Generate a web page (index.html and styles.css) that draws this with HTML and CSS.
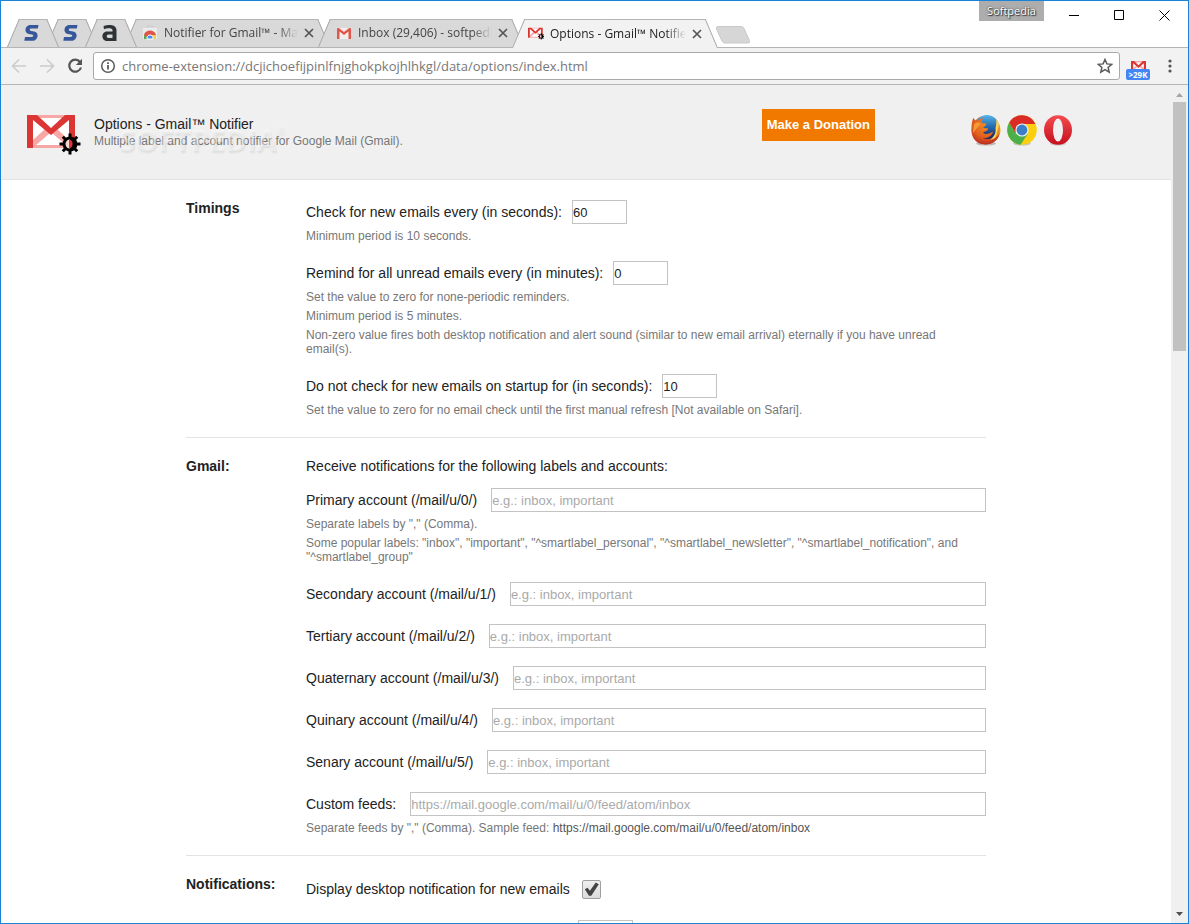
FILE: index.html
```html
<!DOCTYPE html>
<html lang="en">
<head>
    <meta charset="UTF-8">
    <meta name="viewport" content="width=device-width, initial-scale=1.0">
    <title>Options - Gmail™ Notifier</title>
    <link rel="stylesheet" href="styles.css">
</head>
<body>

<svg class="sprite" aria-hidden="true">
    <symbol id="cross" viewBox="0 0 10 10"><path d="M1 1l8 8M9 1l-8 8" fill="none" stroke="currentColor" stroke-width="1.7"/></symbol>
    <symbol id="gear" viewBox="-11 -11 22 22">
        <path d="M0-10.500V10.500M-10.500 0H10.500M-7.200-7.200l14.400 14.400M-7.200 7.200l14.400-14.400" stroke="#000" stroke-width="3"/>
        <circle r="7.500" fill="#000"/>
        <path d="M0-4.500a4.500 4.500 0 0 0 0 9z" fill="#f3d5d5"/>
        <path d="M-1-4.400a4.500 4.500 0 0 1 0 8.800z" fill="#db3634"/>
    </symbol>
    <symbol id="notifier" viewBox="0 0 54 41">
        <path d="M0 0h48v33H0z" fill="#fff"/>
        <path d="M6 0h36v3H6zM6 30h36v3H6z" fill="#f7a8a6"/>
        <path d="M6 31v-6l12-11 5 4L8 31zM42 31v-6L30 14l-5 4 15 13z" fill="#f7a8a6"/>
        <path d="M0 0h10l14 13L38 0h10v33h-6V5L24 20 6 5v28H0z" fill="#db3634"/>
        <use href="#gear" x="32" y="18" width="22" height="22"/>
    </symbol>
    <symbol id="softpedia" viewBox="0 0 15 16"><path d="M14.500 0L13.800 3.600H7.400c-2 0-2.200 2-.2 2.300l3 .5c5.500.9 4 9.400-2 9.400H.3L1 12h6.500c2.200 0 2.400-2 .3-2.400L4.900 9.100C-.4 8.200.7 0 6.500 0z" fill="#36589b"/></symbol>
</svg>

<div class="window">
    <div class="titlebar">
        <div class="tabs">
            <div class="tab pinned">
                <button class="tab-title" aria-label="Softpedia"><svg width="15" height="16"><use href="#softpedia"/></svg></button>
            </div>
            <div class="tab pinned">
                <button class="tab-title" aria-label="Softpedia"><svg width="15" height="16"><use href="#softpedia"/></svg></button>
            </div>
            <div class="tab pinned">
                <button class="tab-title" aria-label="Autoevolution"><svg width="15" height="16" viewBox="0 0 15 16"><path d="M1.500 1.200C5-.6 14.500-1.400 14.500 5.300V16H5C-1.100 16-1.100 6.500 5 6.500h5.500V5.300C10.500 2.700 5 2.900 2 4.200zM10.500 9.500H6.500c-2.400 0-2.400 3.400 0 3.400h4z" fill="#2f3237" fill-rule="evenodd"/></svg></button>
            </div>
            <div class="tab">
                <button class="tab-title">
                    <svg width="16" height="16" viewBox="0 0 16 16">
                        <path d="M5 3V1h6v2" fill="none" stroke="#ccc" stroke-width="1"/>
                        <path d="M1 3h14v11H1z" fill="#ececec"/>
                        <path d="M2 14V10c1-6 11-6 12 0v1H8z" fill="#e0544b"/>
                        <path d="M2 10l5 4H2z" fill="#4caf50"/>
                        <path d="M9 10h5v4H8z" fill="#fbcb43"/>
                        <path d="M5 14v-1c0-4 6-4 6 0v1z" fill="#4a8df0" stroke="#fff"/>
                    </svg>
                    <span>Notifier for Gmail™ - Manager</span>
                </button>
                <button class="tab-close" aria-label="Close tab"><svg width="10" height="10"><use href="#cross"/></svg></button>
            </div>
            <div class="tab">
                <button class="tab-title">
                    <svg width="16" height="16" viewBox="0 0 16 16">
                        <path d="M2 3h12v11H2z" fill="#f3eeee"/>
                        <path d="M1 14V4.200C1 3 2.500 2.600 3.500 3.500L8 7l4.500-3.500C13.500 2.600 15 3 15 4.200V14h-2.500V6.500L8 10 3.500 6.500V14z" fill="#e2574c"/>
                    </svg>
                    <span>Inbox (29,406) - softpedia.com</span>
                </button>
                <button class="tab-close" aria-label="Close tab"><svg width="10" height="10"><use href="#cross"/></svg></button>
            </div>
            <div class="tab active">
                <button class="tab-title">
                    <svg width="16" height="14" viewBox="0 0 52 42"><use href="#notifier" width="54" height="41"/></svg>
                    <span>Options - Gmail™ Notifier</span>
                </button>
                <button class="tab-close" aria-label="Close tab"><svg width="10" height="10"><use href="#cross"/></svg></button>
            </div>
            <button class="new-tab" aria-label="New tab">
                <svg width="36" height="18" viewBox="0 0 36 18"><path d="M3 .5h23q2 0 3 2l5.500 12q1 2.500-1.500 2.500H10q-2 0-3-2L1.500 3Q.6.5 3 .5z" fill="#d6d6d6" stroke="#c9c9c9"/></svg>
            </button>
        </div>
        <span class="brand">Softpedia</span>
        <div class="window-buttons">
            <button aria-label="Minimize"><svg width="11" height="11" viewBox="0 0 11 11"><path d="M0 5.500h10" stroke="#000"/></svg></button>
            <button aria-label="Maximize"><svg width="11" height="11" viewBox="0 0 11 11"><path d="M.5.5h9v9h-9z" fill="none" stroke="#000"/></svg></button>
            <button aria-label="Close"><svg width="11" height="11" viewBox="0 0 11 11"><path d="M.5.5l10 10M10.500.5l-10 10" stroke="#000"/></svg></button>
        </div>
    </div>

    <div class="toolbar">
        <button class="nav disabled" aria-label="Back"><svg width="16" height="16" viewBox="0 0 16 16"><path d="M15 8H2M8 1.500L1.500 8 8 14.500" fill="none" stroke="currentColor" stroke-width="1.700"/></svg></button>
        <button class="nav disabled" aria-label="Forward"><svg width="16" height="16" viewBox="0 0 16 16"><path d="M1 8h13M8 1.500L14.500 8 8 14.500" fill="none" stroke="currentColor" stroke-width="1.700"/></svg></button>
        <button class="nav" aria-label="Reload"><svg width="16" height="16" viewBox="0 0 16 16"><path d="M13 4A6 6 0 1 0 14 9.500" fill="none" stroke="currentColor" stroke-width="2.200"/><path d="M15 .8V7H8.800z" fill="currentColor"/></svg></button>
        <div class="omnibox">
            <svg width="16" height="16" viewBox="0 0 16 16"><circle cx="8" cy="8" r="6.300" fill="none" stroke="#5a5a5a" stroke-width="1.500"/><path d="M8 7v4.500M8 4.200V6" stroke="#5a5a5a" stroke-width="1.800"/></svg>
            <input type="text" aria-label="Address" value="chrome-extension://dcjichoefijpinlfnjghokpkojhlhkgl/data/options/index.html">
            <button aria-label="Bookmark this page"><svg width="16" height="16" viewBox="0 0 16 16"><path d="M8 1.500l1.900 4.400 4.800.4-3.600 3.200 1.100 4.700L8 11.700l-4.200 2.500 1.100-4.700L1.300 6.300l4.800-.4z" fill="none" stroke="#5a5a5a" stroke-width="1.500"/></svg></button>
        </div>
        <button class="extension" aria-label="Gmail Notifier">
            <svg width="15" height="8" viewBox="0 0 48 25"><path d="M0 0h48v25H0z" fill="#fff"/><path d="M6 2h36M9 25l9-8M39 25l-9-8" stroke="#f7a8a6" stroke-width="5"/><path d="M0 0h10l14 13L38 0h10v25h-7V7L24 22 7 7v18H0z" fill="#db3634"/></svg>
            <span>&gt;29K</span>
        </button>
        <button class="nav menu" aria-label="Menu"><svg width="4" height="14" viewBox="0 0 4 14"><circle cx="2" cy="2" r="1.600"/><circle cx="2" cy="7" r="1.600"/><circle cx="2" cy="12" r="1.600"/></svg></button>
    </div>

    <div class="viewport">
        <div class="page">
            <header>
                <svg class="logo" width="54" height="41"><use href="#notifier"/></svg>
                <div class="heading">
                    <h1>Options - Gmail™ Notifier</h1>
                    <p>Multiple label and account notifier for Google Mail (Gmail).</p>
                    <span class="watermark">SOFTPEDIA<sup>®</sup></span>
                </div>
                <button class="donate">Make a Donation</button>
                <div class="browsers">
                    <a href="#" aria-label="Firefox"><svg width="30" height="32" viewBox="0 0 30 32">
                        <defs>
                            <radialGradient id="ff" cx=".5" cy=".3" r=".7"><stop offset="0" stop-color="#f28a25"/><stop offset=".6" stop-color="#e2601d"/><stop offset="1" stop-color="#b92b20"/></radialGradient>
                            <linearGradient id="globe" x2="0" y2="1"><stop offset="0" stop-color="#57b5ea"/><stop offset=".5" stop-color="#2468ae"/><stop offset="1" stop-color="#1d2358"/></linearGradient>
                        </defs>
                        <ellipse cx="15" cy="28.500" rx="10" ry="2" fill="#bdb5b2"/>
                        <circle cx="15" cy="15" r="14.300" fill="url(#ff)"/>
                        <circle cx="16" cy="12" r="12" fill="url(#globe)"/>
                        <path d="M25 4c5 6 7 15 0 20-2 2-5 2-6 1 5-4 6-7 5.500-12 1-3 1-6 .5-9z" fill="#fbd557"/>
                        <path d="M28 9c2 6 1 11-4 15 1.500-4 3-9 4-15z" fill="#e88a24"/>
                        <path d="M2.500 2.800C3 5 5 6 7 5.500c2-1.800 4-2.500 5-2-1.500 1.500-1.500 3-.5 4.500l4 .5c0 2-2 2.500-3.500 4.500l5 .2c.5 2-2 3-5 4 2 3 6 2 10-.7-.5 4-5 7-10 7 6 3 14 1 17-7-1 8-7 13-15 13C5 29 .5 23 .5 15c0-5 .3-9 2-12.200z" fill="url(#ff)"/>
                        <path d="M3 9l4-2 3 2-4 4-4 5z" fill="#f49a34"/>
                    </svg></a>
                    <a href="#" aria-label="Chrome"><svg width="30" height="32" viewBox="0 0 30 32">
                        <ellipse cx="15" cy="28.500" rx="9" ry="2" fill="#c5c5c5"/>
                        <circle cx="15" cy="15" r="14.800" fill="#fbcf10"/>
                        <path d="M2.200 7.500A14.800 14.800 0 0 0 13.500 29.700L21 18.500 9 19z" fill="#4bb04a"/>
                        <path d="M2.200 7.500A14.800 14.800 0 0 1 28.400 9H15l-6.500 9z" fill="#db2b27"/>
                        <circle cx="15" cy="15" r="6.600" fill="#eef2f5"/>
                        <circle cx="15" cy="15" r="5.400" fill="#3c7fc9"/>
                    </svg></a>
                    <a href="#" aria-label="Opera"><svg width="30" height="32" viewBox="0 0 30 32">
                        <defs><linearGradient id="op" x2="0" y2="1"><stop offset="0" stop-color="#f34c50"/><stop offset="1" stop-color="#c60f1d"/></linearGradient></defs>
                        <ellipse cx="15" cy="28.500" rx="8" ry="2" fill="#c5c5c5"/>
                        <ellipse cx="15" cy="15" rx="14" ry="14.800" fill="url(#op)"/>
                        <ellipse cx="15" cy="15" rx="5" ry="11.500" fill="#f0f0f0"/>
                    </svg></a>
                </div>
            </header>

            <main>
                <section>
                    <h2>Timings</h2>
                    <div class="options">
                        <div class="option">
                            <div class="row">
                                <label for="period">Check for new emails every (in seconds):</label>
                                <input type="text" id="period" class="number" value="60">
                            </div>
                            <p>Minimum period is 10 seconds.</p>
                        </div>
                        <div class="option">
                            <div class="row">
                                <label for="remind">Remind for all unread emails every (in minutes):</label>
                                <input type="text" id="remind" class="number" value="0">
                            </div>
                            <p>Set the value to zero for none-periodic reminders.</p>
                            <p>Minimum period is 5 minutes.</p>
                            <p>Non-zero value fires both desktop notification and alert sound (similar to new email arrival) eternally if you have unread email(s).</p>
                        </div>
                        <div class="option">
                            <div class="row">
                                <label for="startup">Do not check for new emails on startup for (in seconds):</label>
                                <input type="text" id="startup" class="number" value="10">
                            </div>
                            <p>Set the value to zero for no email check until the first manual refresh [Not available on Safari].</p>
                        </div>
                    </div>
                </section>

                <section>
                    <h2>Gmail:</h2>
                    <div class="options">
                        <div class="intro">Receive notifications for the following labels and accounts:</div>
                        <div class="option">
                            <div class="row wide">
                                <label for="feed0">Primary account (/mail/u/0/)</label>
                                <input type="text" id="feed0" placeholder="e.g.: inbox, important">
                            </div>
                            <p>Separate labels by "," (Comma).</p>
                            <p>Some popular labels: "inbox", "important", "^smartlabel_personal", "^smartlabel_newsletter", "^smartlabel_notification", and "^smartlabel_group"</p>
                        </div>
                        <div class="row wide">
                            <label for="feed1">Secondary account (/mail/u/1/)</label>
                            <input type="text" id="feed1" placeholder="e.g.: inbox, important">
                        </div>
                        <div class="row wide">
                            <label for="feed2">Tertiary account (/mail/u/2/)</label>
                            <input type="text" id="feed2" placeholder="e.g.: inbox, important">
                        </div>
                        <div class="row wide">
                            <label for="feed3">Quaternary account (/mail/u/3/)</label>
                            <input type="text" id="feed3" placeholder="e.g.: inbox, important">
                        </div>
                        <div class="row wide">
                            <label for="feed4">Quinary account (/mail/u/4/)</label>
                            <input type="text" id="feed4" placeholder="e.g.: inbox, important">
                        </div>
                        <div class="row wide">
                            <label for="feed5">Senary account (/mail/u/5/)</label>
                            <input type="text" id="feed5" placeholder="e.g.: inbox, important">
                        </div>
                        <div class="option">
                            <div class="row wide">
                                <label for="custom">Custom feeds:</label>
                                <input type="text" id="custom" placeholder="https://mail.google.com/mail/u/0/feed/atom/inbox">
                            </div>
                            <p>Separate feeds by "," (Comma). Sample feed: <span class="sample">https://mail.google.com/mail/u/0/feed/atom/inbox</span></p>
                        </div>
                    </div>
                </section>

                <section>
                    <h2>Notifications:</h2>
                    <div class="options">
                        <div class="row check">
                            <label for="desktop">Display desktop notification for new emails</label>
                            <input type="checkbox" id="desktop" checked>
                        </div>
                        <div class="row">
                            <input type="text" class="number timeout" aria-label="Notification time">
                        </div>
                    </div>
                </section>
            </main>
        </div>
        <div class="scrollbar">
            <svg width="17" height="17" viewBox="0 0 17 17"><path d="M5 12l3.500-4 3.500 4z" fill="#a3a3a3"/></svg>
            <div class="track"><div class="thumb"></div></div>
            <svg width="17" height="17" viewBox="0 0 17 17"><path d="M5 6l3.500 4L12 6z" fill="#505050"/></svg>
        </div>
    </div>
</div>

</body>
</html>
```
FILE: styles.css
```css
* {
    box-sizing: border-box;
}
body {
    margin: 0;
    font-family: Arial, "Liberation Sans", sans-serif;
    font-size: 14px;
    line-height: 16px;
    color: #222;
}
button {
    padding: 0;
    border: 0;
    background: none;
    font: inherit;
    color: inherit;
}
svg {
    display: block;
    flex: none;
}
.sprite {
    position: absolute;
    width: 0;
    height: 0;
}
.window {
    display: flex;
    flex-direction: column;
    height: 100vh;
    overflow: hidden;
    border: 1px solid #1883d7;
    background: #fff;
}

/* Tab strip */
.titlebar {
    display: flex;
    align-items: flex-start;
    height: 46px;
    padding-right: 1px;
    font-family: "Open Sans", sans-serif;
    font-size: 12px;
}
.tabs {
    display: flex;
    flex: 1;
    min-width: 0;
    padding: 18px 0 0 6px;
}
.tab {
    position: relative;
    z-index: 1;
    display: flex;
    align-items: center;
    width: 206px;
    height: 28px;
    margin-right: -12px;
    padding: 0 16px 0 18px;
    color: #444;
}
.tab::before,
.tab::after {
    content: "";
    position: absolute;
    top: 0;
    bottom: 0;
    width: 50%;
    border-top: 1px solid #b5b5b5;
    background: #d9d9d9;
}
.tab::before {
    left: 0;
    border-left: 1px solid #a8a8a8;
    transform: skewX(-23deg);
    transform-origin: left bottom;
}
.tab::after {
    right: 0;
    border-right: 1px solid #a8a8a8;
    transform: skewX(23deg);
    transform-origin: right bottom;
}
.pinned {
    z-index: 2;
    width: 51px;
    padding: 0 19px 0 17px;
}
.pinned:first-child {
    z-index: 3;
}
.active {
    z-index: 4;
    height: 29px;
    padding-left: 16px;
    color: #222;
}
.active::before,
.active::after {
    background: #f2f2f2;
}
.tab-title {
    position: relative;
    z-index: 1;
    display: flex;
    align-items: center;
    gap: 6px;
    flex: 1;
    min-width: 0;
}
.tab-title span {
    flex: 1;
    overflow: hidden;
    white-space: nowrap;
    text-align: left;
    -webkit-mask-image: linear-gradient(to left, transparent, #000 20px);
    mask-image: linear-gradient(to left, transparent, #000 20px);
}
.tab-close {
    position: relative;
    z-index: 1;
    margin-left: 6px;
    color: #555;
}
.new-tab {
    margin: 7px 0 0 9px;
    align-self: flex-start;
}
.brand {
    width: 65px;
    height: 20px;
    background: #adadad;
    color: #fff;
    font-size: 11px;
    line-height: 20px;
    text-align: center;
    text-shadow: 0 0 2px #333, 1px 1px 1px #333;
}
.window-buttons {
    display: flex;
    margin-left: 8px;
}
.window-buttons button {
    display: flex;
    align-items: center;
    justify-content: center;
    width: 45px;
    height: 28px;
}

/* Toolbar */
.toolbar {
    display: flex;
    align-items: center;
    height: 38px;
    padding: 0 8px 0 4px;
    border-top: 1px solid #b5b5b5;
    border-bottom: 1px solid #b5b5b5;
    background: #f2f2f2;
}
.nav {
    display: flex;
    align-items: center;
    justify-content: center;
    width: 28px;
    height: 28px;
    color: #555;
}
.disabled {
    color: #ccc;
}
.menu {
    width: 20px;
    margin-left: 10px;
    fill: #555;
}
.omnibox {
    display: flex;
    align-items: center;
    flex: 1;
    gap: 6px;
    height: 28px;
    margin: 0 6px 0 4px;
    padding: 0 6px;
    border: 1px solid #a9a9a9;
    border-radius: 3px;
    background: #fff;
}
.omnibox input {
    flex: 1;
    min-width: 0;
    padding: 0;
    border: 0;
    outline: 0;
    color: #777;
    font: 13px "Open Sans", sans-serif;
}
.extension {
    display: flex;
    flex-direction: column;
    align-items: center;
    width: 24px;
    margin-top: 8px;
}
.extension span {
    width: 24px;
    height: 11px;
    border-radius: 2px;
    background: #4285f4;
    color: #fff;
    font: bold 8px/11px "Open Sans", sans-serif;
}

/* Page */
.viewport {
    display: flex;
    flex: 1;
    min-height: 0;
}
.page {
    flex: 1;
    min-width: 0;
    overflow: hidden;
}
header {
    display: flex;
    align-items: flex-start;
    height: 95px;
    padding: 24px 98px 0 26px;
    border-bottom: 1px solid #e3e3e3;
    background: #f0f0f0;
}
.logo {
    margin-top: 6px;
}
.heading {
    position: relative;
    flex: 1;
    margin: 7px 0 0 13px;
}
h1 {
    margin: 0;
    font-size: 14px;
    font-weight: normal;
}
header p {
    margin: 0;
    color: #777;
    font-size: 12px;
    line-height: 18px;
}
.watermark {
    position: absolute;
    top: 9px;
    left: 25px;
    color: rgba(255, 255, 255, 0.4);
    font: bold 29px/30px "Open Sans", sans-serif;
    text-shadow: 1px 2px 2px rgba(0, 0, 0, 0.08);
    pointer-events: none;
}
.watermark sup {
    font-size: 10px;
    line-height: 10px;
    vertical-align: top;
}
.donate {
    height: 32px;
    padding: 0 5px;
    background: #f27900;
    color: #fff;
    font-size: 13px;
    font-weight: bold;
}
.browsers {
    display: flex;
    gap: 6px;
    margin: 6px 0 0 96px;
}
main {
    max-width: 800px;
    margin: 0 auto;
}
section {
    display: grid;
    grid-template-columns: 120px 1fr;
    padding: 20px 0;
    border-bottom: 1px solid #e3e3e3;
}
h2 {
    margin: 0;
    font-size: 14px;
    font-weight: bold;
}
.options {
    display: flex;
    flex-direction: column;
    gap: 18px;
    min-width: 0;
}
.option p {
    max-width: 670px;
    margin: 5px 0 0;
    color: #777;
    font-size: 12px;
    line-height: 14px;
}
.option .sample {
    color: #555;
}
.intro {
    margin-bottom: -4px;
}
.row {
    display: flex;
    align-items: center;
    gap: 10px;
}
.wide {
    gap: 14px;
}
.check {
    gap: 12px;
    height: 26px;
}
.row input[type="text"] {
    height: 24px;
    padding: 0;
    border: 1px solid #c3c3c3;
    border-radius: 0;
    background: #fff;
    color: #222;
    font: 13px Arial, "Liberation Sans", sans-serif;
}
.row ::placeholder {
    color: #aaa;
}
.row .number {
    width: 55px;
}
.row .timeout {
    margin-left: 272px;
}
.wide input {
    flex: 1;
    min-width: 0;
}
.row input[type="checkbox"] {
    appearance: none;
    width: 19px;
    height: 19px;
    margin: 0;
    border: 1px solid #a0a0a0;
    border-radius: 2px;
    background: linear-gradient(#eee, #dcdcdc);
}
.row input[type="checkbox"]:checked::before {
    content: "";
    display: block;
    width: 17px;
    height: 17px;
    background: #444;
    clip-path: polygon(12% 52%, 28% 42%, 42% 60%, 76% 12%, 94% 22%, 50% 90%, 36% 90%);
}

/* Scrollbar */
.scrollbar {
    display: flex;
    flex-direction: column;
    width: 17px;
    background: #f0f0f0;
}
.track {
    flex: 1;
    padding: 0 2px;
}
.thumb {
    height: 31%;
    background: #c1c1c1;
}
```
